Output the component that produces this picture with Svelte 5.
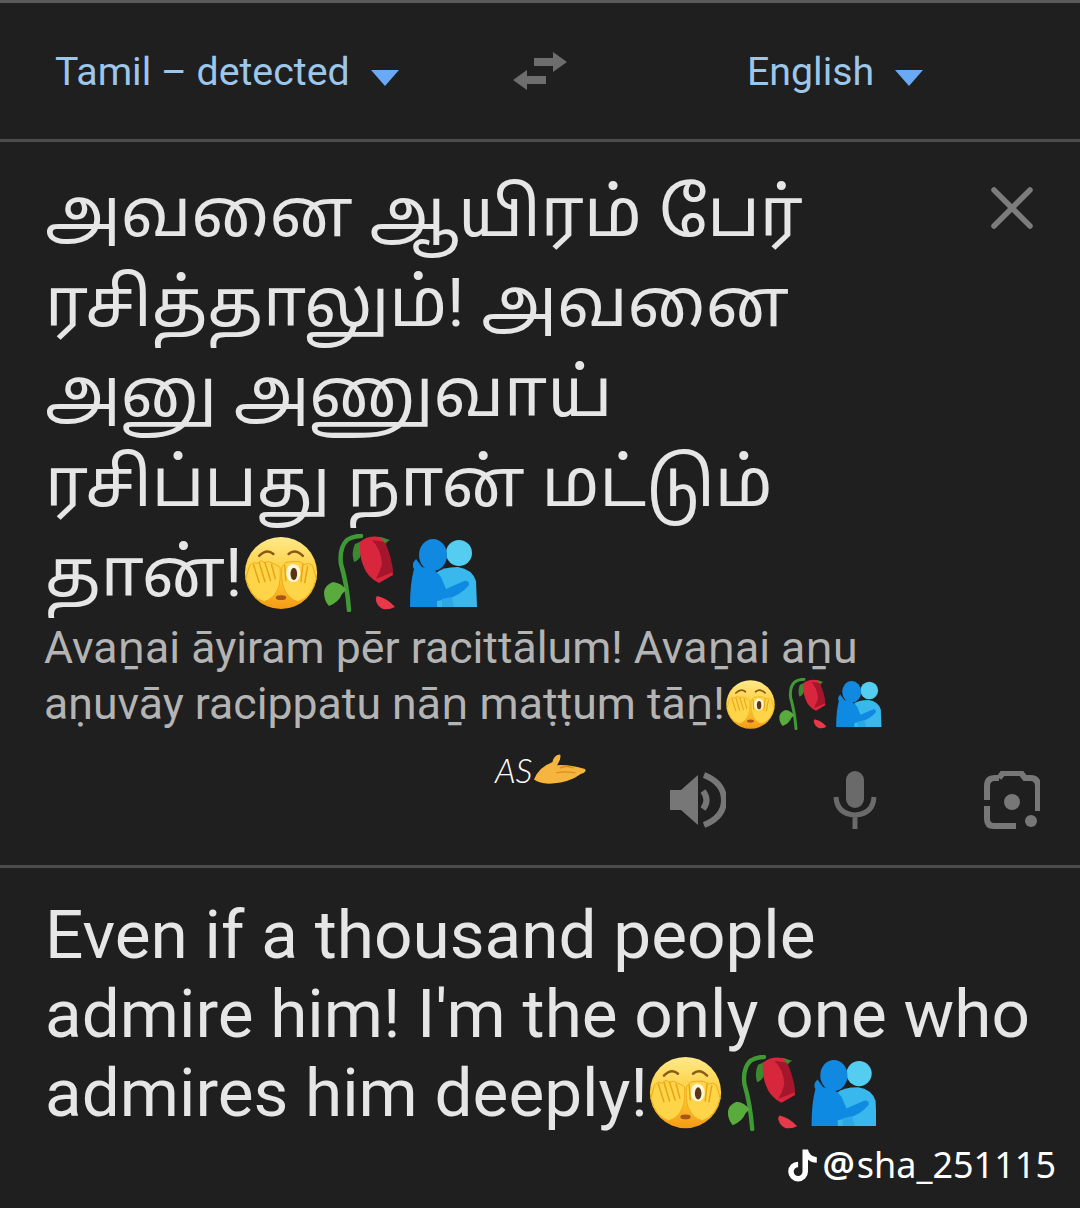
<script>
	const sourceLines = ['அவனை ஆயிரம் பேர்', 'ரசித்தாலும்! அவனை', 'அனு அணுவாய்', 'ரசிப்பது நான் மட்டும்'];
	const romanLines = ['Avaṉai āyiram pēr racittālum! Avaṉai aṉu'];
	const targetLines = ['Even if a thousand people', "admire him! I'm the only one who"];
</script>

{#snippet face(size)}
	<svg class="emoji" width={size} height={size} viewBox="0 0 80 80">
		<defs>
			<linearGradient id="skin" x1="0" y1="0" x2="0" y2="1">
				<stop offset="0" stop-color="#ffe98a" />
				<stop offset="0.55" stop-color="#fdcb35" />
				<stop offset="1" stop-color="#f69a14" />
			</linearGradient>
		</defs>
		<circle cx="40" cy="40" r="38" fill="url(#skin)" />
		<path d="M17 22q8-8 15-2M48 20q7-6 15 2" fill="none" stroke="#8a5a12" stroke-width="2.600" stroke-linecap="round" />
		<ellipse cx="40" cy="66" rx="5.500" ry="2.500" fill="#a5561a" />
		<path d="M3 46 7 32l4-3 4 1 4-3 4 2 4-1Q35 31 39 34q1 14-2 22-5 12-15 14Q8 66 3 46z" fill="#fed548" stroke="#eeaa1e" stroke-width="1" />
		<path d="M77 46 73 32l-4-2-4 1-6-3-8 0-6 1-4 5q-1 14 2 22 5 12 15 14 14-4 19-24z" fill="#fed548" stroke="#eeaa1e" stroke-width="1" />
		<ellipse cx="53" cy="40" rx="7.500" ry="9.500" fill="#fff6da" />
		<ellipse cx="53.500" cy="41" rx="3.500" ry="6.500" fill="#5b3413" />
		<path d="M11 31l6 19M17 29l6 20M23 29l6 19M30 31l4 15M68 33l-3 17M63 31l-2 18M44 32l1 16" stroke="#e8a416" stroke-width="1.600" fill="none" stroke-linecap="round" />
	</svg>
{/snippet}

{#snippet rose(size)}
	<svg class="emoji" width={size * 76 / 78} height={size} viewBox="-3 0 76 78">
		<path d="M27 76Q25 50 19 30q-2-16 6-24 6-4 14-4" fill="none" stroke="#3f9a35" stroke-width="4.500" stroke-linecap="round" />
		<path d="M24 56q-4-7-13-8-8 3-9 10 0 9 5 14 10-4 13-12z" fill="#5aab3e" />
		<path d="M33 10q-4 8-1 18 6-2 7-8 2-7 1-13z" fill="#3b8a30" />
		<path d="M38 8q8-7 20-5 6 1 8 4-2 2-3 4 7 14 8 30l-14 8q-12-6-16-18-4-10-3-23z" fill="#d8263c" />
		<path d="M50 6q9 9 10 24-2 8-6 15 10-4 17-7-1-14-8-30z" fill="#a3162b" />
		<path d="M58 3l10 3-5 3z" fill="#3b8a30" />
		<path d="M55 62q10 2 18 11-6 3-12 2-5-2-7-8-1-3 1-5z" fill="#e8384a" />
	</svg>
{/snippet}

{#snippet hug(size)}
	<svg class="emoji" width={size * 82 / 68} height={size} viewBox="-15 0 82 68">
		<circle cx="49" cy="14" r="13" fill="#55cdf1" />
		<path d="M26 68V34q6-6 22-6 14 2 18 14l1 26z" fill="#38b8ec" />
		<ellipse cx="23" cy="16" rx="14" ry="16" fill="#1289e0" />
		<path d="M0 68Q0 44 4 30q-3-5 2-10l6 8q14 2 19 10l5 12 18-8q5-1 5 4-8 10-22 14l-10 2v6z" fill="#0f8ae2" />
		<path d="M32 68v-8l10-2 2 10z" fill="#2aa8e8" />
	</svg>
{/snippet}

<main class="page">
	<header class="lang-bar">
		<button class="lang lang-source">Tamil – detected<span class="caret"></span></button>
		<svg class="swap" width="56" height="44" viewBox="0 0 56 44">
			<path d="M1 31 15 21v6h19v8H15v6zM55 13 41 23v-6H22V9h19V3z" fill="#6d6d6d" />
		</svg>
		<button class="lang lang-target">English<span class="caret"></span></button>
	</header>

	<section class="source">
		<svg class="close" width="44" height="44" viewBox="0 0 44 44">
			<path d="M4 4 40 40M40 4 4 40" stroke="#7c7c7c" stroke-width="5.500" stroke-linecap="round" />
		</svg>
		<div class="tamil">
			{#each sourceLines as line}
				<div>{line}</div>
			{/each}
			<div class="with-emoji">தான்!{@render face(76)}{@render rose(78)}{@render hug(68)}</div>
		</div>
		<div class="roman">
			{#each romanLines as line}
				<div>{line}</div>
			{/each}
			<div class="with-emoji">aṇuvāy racippatu nāṉ maṭṭum tāṉ!{@render face(51)}{@render rose(52)}{@render hug(46)}</div>
		</div>
		<div class="source-foot">
			<div class="signature">
				<span class="as">AS</span>
				<svg width="54" height="32" viewBox="0 0 56 32">
					<path d="M1 27Q6 14 20 9q2-8 8-8 2 3-3 11 12-1 29 4 2 3-4 5-12 9-30 10Q8 32 1 27z" fill="#f5b53f" />
					<path d="M28 15q8-3 14 0M24 20q10-2 20 0" stroke="#d98e1e" stroke-width="1.500" fill="none" />
				</svg>
			</div>
			<div class="actions">
				<svg width="58" height="58" viewBox="0 0 58 58">
					<path d="M2 19h11L30 4v50L13 39H2z" fill="#777" />
					<path d="M35 20q7 9 0 18" fill="none" stroke="#777" stroke-width="6" />
					<path d="M36 4q20 8 20 25T36 54" fill="none" stroke="#777" stroke-width="6" />
				</svg>
				<svg width="44" height="60" viewBox="0 0 44 60">
					<rect x="13" y="1" width="18" height="37" rx="9" fill="#6a6a6a" />
					<path d="M3 27q1 17 19 18 18-1 19-18M22 45v14" fill="none" stroke="#6a6a6a" stroke-width="5" />
				</svg>
				<svg width="56" height="58" viewBox="0 0 56 58">
					<path d="M15 7l4-5h18l4 5h5q8 0 8 8v25M3 29V15q0-8 8-8h4M3 35v13q0 7 7 7h22" fill="none" stroke="#777" stroke-width="6" />
					<circle cx="28" cy="31" r="8" fill="#777" />
					<circle cx="47" cy="50" r="6" fill="#777" />
				</svg>
			</div>
		</div>
	</section>

	<section class="target">
		{#each targetLines as line}
			<div>{line}</div>
		{/each}
		<div class="with-emoji">admires him deeply!{@render face(75)}{@render rose(76)}{@render hug(66)}</div>
		<div class="watermark">
			<svg width="33" height="36" viewBox="0 0 30 32">
				<path d="M15 2h5q1 6 8 7v5q-5 0-8-3v11a9 9 0 1 1-9-9v5a4 4 0 1 0 4 4z" fill="#fff" />
			</svg>
			<span class="at">@</span><span>sha_251115</span>
		</div>
	</section>
</main>

<style>
	:global(body) {
		background: #1f1f1f;
	}

	.page {
		width: 1080px;
		height: 1208px;
		box-sizing: border-box;
		overflow: hidden;
		background: #1f1f1f;
		border-top: 3px solid #5a5a5a;
		font-family: Roboto, "Noto Sans Tamil", "Noto Sans", sans-serif;
		color: #e4e4e4;
	}

	.lang-bar {
		display: grid;
		grid-template-columns: 480px 120px 1fr;
		align-items: center;
		height: 136px;
		border-bottom: 3px solid #4c4c4c;
		box-sizing: content-box;
	}

	.lang {
		display: flex;
		align-items: center;
		gap: 21px;
		background: none;
		border: none;
		padding: 2px 0 0;
		font-family: inherit;
		font-size: 39.3px;
		color: #9cc6ea;
		white-space: nowrap;
	}

	.lang-source {
		margin-left: 55px;
	}

	.lang-target {
		margin-left: 147px;
	}

	.caret {
		width: 0;
		height: 0;
		margin-top: 12px;
		border-left: 14px solid transparent;
		border-right: 14px solid transparent;
		border-top: 16px solid #6aa9f4;
	}

	.swap {
		justify-self: center;
	}

	.source {
		position: relative;
		height: 726px;
		box-sizing: border-box;
		padding: 26px 24px 0 45px;
		border-bottom: 3px solid #4c4c4c;
	}

	.close {
		position: absolute;
		top: 44px;
		right: 46px;
	}

	.tamil {
		font-size: 67.5px;
		line-height: 90px;
		color: #e6e6e6;
	}

	.with-emoji {
		display: flex;
		align-items: center;
		white-space: pre;
	}

	.emoji {
		flex-shrink: 0;
	}

	.roman {
		margin-top: 2px;
		margin-left: -1px;
		font-size: 44.6px;
		line-height: 56px;
		color: #b4b4b4;
	}

	.source-foot {
		display: flex;
		justify-content: space-between;
		align-items: flex-start;
		padding: 20px 16px 0 450px;
	}

	.signature {
		display: flex;
		align-items: center;
		height: 40px;
		margin-top: -3px;
	}

	.as {
		font-family: Lato, sans-serif;
		font-style: italic;
		font-weight: 300;
		font-size: 34px;
		color: #fff;
	}

	.actions {
		display: flex;
		align-items: center;
		gap: 107px;
		margin-top: 18px;
	}

	.target {
		position: relative;
		padding: 27px 24px 0 45px;
		font-size: 67.5px;
		line-height: 79px;
		color: #e6e6e6;
	}

	.watermark {
		position: absolute;
		top: 275px;
		right: 24px;
		display: flex;
		align-items: center;
		gap: 3px;
		font-family: "Noto Sans", sans-serif;
		font-size: 36px;
		line-height: 44px;
		color: #fff;
	}

	.at {
		font-weight: 600;
		margin-right: -1px;
	}
</style>
